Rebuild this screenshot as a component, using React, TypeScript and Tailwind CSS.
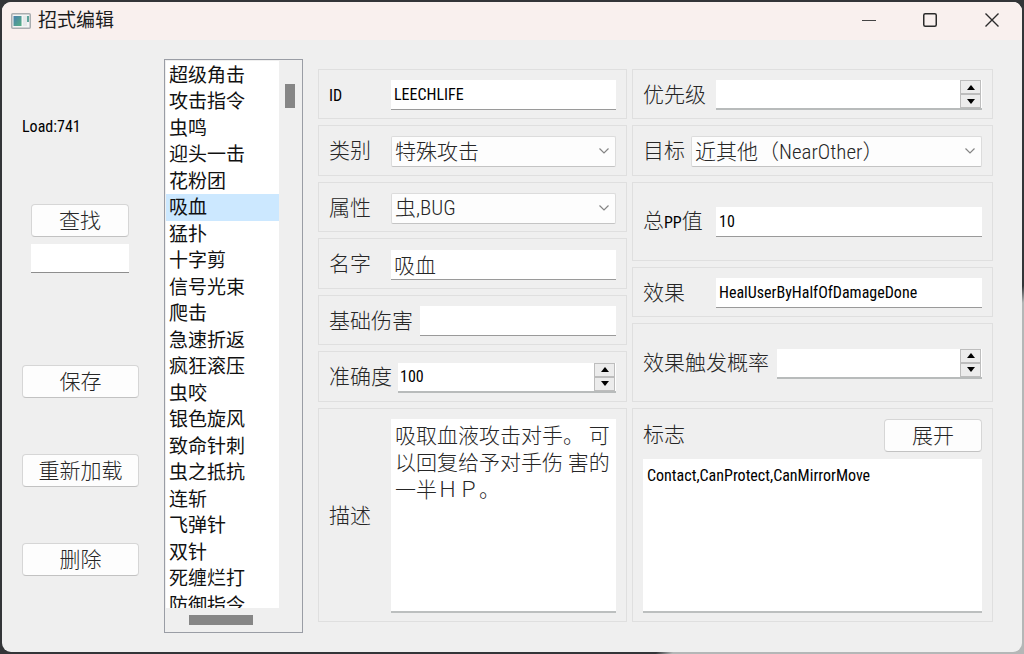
import { useState } from "react";
import type { ReactNode } from "react";

const MOVES = [
  "超级角击", "攻击指令", "虫鸣", "迎头一击", "花粉团", "吸血", "猛扑",
  "十字剪", "信号光束", "爬击", "急速折返", "疯狂滚压", "虫咬", "银色旋风",
  "致命针刺", "虫之抵抗", "连斩", "飞弹针", "双针", "死缠烂打", "防御指令",
];

const LATIN = "font-['Roboto_Condensed','Liberation_Sans_Narrow','Noto_Sans_CJK_SC',sans-serif] text-[16px] font-normal text-black";
const FIELD = "h-[30px] w-full min-w-0 flex-1 border-b border-[#9a9a9a] bg-white px-[3px] outline-none";

function PushButton({ children, className = "" }: { children: ReactNode; className?: string }) {
  return (
    <button
      type="button"
      className={`h-[33px] rounded-[4px] border border-[#d6d6d6] border-b-[#c2c2c2] bg-[#fdfdfd] leading-[30px] ${className}`}
    >
      {children}
    </button>
  );
}

function Box({ children, className = "" }: { children: ReactNode; className?: string }) {
  return <div className={`flex border border-[#dfdfdf] px-[10px] ${className}`}>{children}</div>;
}

function Label({ id, width, children }: { id: string; width: string; children: ReactNode }) {
  return (
    <label htmlFor={id} className={`shrink-0 whitespace-nowrap ${width}`}>
      {children}
    </label>
  );
}

function Combo({ id, value }: { id: string; value: string }) {
  return (
    <div className="relative min-w-0 flex-1">
      <select
        id={id}
        defaultValue={value}
        className="block h-[31px] w-full appearance-none rounded-[2px] border border-[#dcdcdc] border-b-[#c4c4c4] bg-[#fdfdfd] pl-[3px] leading-[28px] outline-none"
      >
        <option>{value}</option>
      </select>
      <svg
        viewBox="0 0 12 8"
        className="pointer-events-none absolute top-[11px] right-[6px] h-2 w-3"
        fill="none"
        stroke="#858585"
        strokeWidth="1.2"
      >
        <path d="M1.5 1.5 6 6l4.5-4.5" />
      </svg>
    </div>
  );
}

function Spin({ id, value }: { id: string; value: string }) {
  const [text, setText] = useState(value);
  const step = (by: number) => setText(String((Number(text) || 0) + by));
  const arrow = "flex h-[14px] w-[21px] items-center justify-center border border-[#bdbdbd] bg-[#ececec]";
  return (
    <div className="flex h-[30px] min-w-0 flex-1 border-b-2 border-[#b8bbbb] bg-white">
      <input
        id={id}
        value={text}
        onChange={(e) => setText(e.target.value)}
        className={`w-full min-w-0 flex-1 px-0.5 outline-none ${LATIN}`}
      />
      <div className="flex flex-col pr-px">
        <button type="button" aria-label="+" onClick={() => step(1)} className={arrow}>
          <svg viewBox="0 0 8 5" className="h-[5px] w-2"><path d="M4 0l4 5H0z" /></svg>
        </button>
        <button type="button" aria-label="-" onClick={() => step(-1)} className={arrow}>
          <svg viewBox="0 0 8 5" className="h-[5px] w-2"><path d="M4 5l4-5H0z" /></svg>
        </button>
      </div>
    </div>
  );
}

function TitleBar() {
  return (
    <header className="flex h-[38px] shrink-0 items-center bg-[#f9f0ee] pl-[9px]">
      <svg viewBox="0 0 20 16" className="h-4 w-5">
        <defs>
          <linearGradient id="pane" x1="0" y1="0" x2="1" y2="1">
            <stop offset="0" stopColor="#4a7fae" />
            <stop offset="1" stopColor="#55b184" />
          </linearGradient>
        </defs>
        <rect x="0.75" y="0.75" width="18.5" height="14.5" rx="1" fill="#f3f5f5" stroke="#a9adb0" strokeWidth="1.5" />
        <rect x="2.5" y="3" width="8" height="10" fill="url(#pane)" />
        <rect x="12" y="3" width="4" height="10" fill="#e4e9ea" />
        <rect x="16" y="3" width="2" height="6" fill="#5fa59b" />
      </svg>
      <h1 className="ml-[7px] flex-1 text-[19px] leading-7 text-[#1c1c1c]">招式编辑</h1>
      <div className="flex h-full pb-[2px]">
        <button type="button" aria-label="最小化" className="flex w-[58px] items-center justify-center">
          <svg viewBox="0 0 14 14" className="size-[14px]" stroke="#444" strokeWidth="1.2"><path d="M0 7.500h14" /></svg>
        </button>
        <button type="button" aria-label="最大化" className="flex w-16 items-center justify-center">
          <svg viewBox="0 0 14 14" className="size-[14px]" fill="none" stroke="#2b2b2b" strokeWidth="1.5">
            <rect x="0.75" y="0.75" width="12.5" height="12.5" rx="1.5" />
          </svg>
        </button>
        <button type="button" aria-label="关闭" className="flex w-[60px] items-center justify-center">
          <svg viewBox="0 0 14 14" className="size-[14px]" stroke="#2b2b2b" strokeWidth="1.4"><path d="M.5.5l13 13M13.500.5l-13 13" /></svg>
        </button>
      </div>
    </header>
  );
}

function MoveList() {
  const [selected, setSelected] = useState(5);
  return (
    <div className="flex w-[139px] shrink-0 flex-col border border-[#9a9da5] p-px">
      <div className="flex min-h-0 flex-1">
        <ul role="listbox" aria-label="招式" className="min-w-0 flex-1 overflow-hidden bg-white pt-px text-[19px] leading-7 text-[#111]">
          {MOVES.map((move, i) => (
            <li
              key={move}
              role="option"
              aria-selected={i === selected}
              onClick={() => setSelected(i)}
              className={`pl-[3px] whitespace-nowrap odd:h-[26px] even:h-[27px] ${i === selected ? "bg-[#cce8ff]" : ""}`}
            >
              {move}
            </li>
          ))}
        </ul>
        <div className="w-[22px] pt-[23px] pl-[6px]">
          <div className="h-6 w-[10px] bg-[#868686]" />
        </div>
      </div>
      <div className="h-[23px] pt-[7px] pl-[23px]">
        <div className="h-[10px] w-16 bg-[#868686]" />
      </div>
    </div>
  );
}

export default function App() {
  return (
    <div className="flex h-screen flex-col bg-[linear-gradient(135deg,#333538_78%,#b4b7b7_79%)] p-[2px] font-['Roboto_Condensed','Liberation_Sans_Narrow','Noto_Sans_CJK_SC',sans-serif] text-[21px] leading-[27px] text-[#262626]">
      <div className="flex min-h-0 flex-1 flex-col overflow-hidden rounded-[9px] bg-[#efefef]">
        <TitleBar />
        <main className="flex min-h-0 flex-1 pt-[19px] pr-[29px] pb-[19px] pl-5">
          <aside className="flex w-[142px] shrink-0 flex-col font-light">
            <p className={`mt-[54px] leading-[27px] ${LATIN}`}>Load:741</p>
            <div className="mt-[64px] ml-[9px] flex w-[98px] flex-col gap-[7px]">
              <PushButton>查找</PushButton>
              <input aria-label="查找" className="h-[29px] w-full border-b border-[#8e8e8e] bg-white px-[3px] outline-none" />
            </div>
            <div className="mt-[92px] flex w-[117px] flex-col gap-14">
              <PushButton>保存</PushButton>
              <PushButton>重新加载</PushButton>
              <PushButton>删除</PushButton>
            </div>
          </aside>

          <MoveList />

          <form className="ml-[15px] flex min-w-0 flex-1 gap-[5px] pt-[10px] pb-[11px] font-light">
            <section className="flex min-w-0 flex-[309] flex-col gap-[6px]">
              <Box className="h-[50px] items-center pt-[2px]">
                <Label id="move-id" width="w-[62px]"><span className={LATIN}>ID</span></Label>
                <input id="move-id" defaultValue="LEECHLIFE" className={`${FIELD} ${LATIN}`} />
              </Box>
              <Box className="h-[51px] items-center pt-[2px]">
                <Label id="category" width="w-[62px]">类别</Label>
                <Combo id="category" value="特殊攻击" />
              </Box>
              <Box className="h-[50px] items-center pt-[2px]">
                <Label id="type" width="w-[62px]">属性</Label>
                <Combo id="type" value="虫,BUG" />
              </Box>
              <Box className="h-[51px] items-center pt-[2px]">
                <Label id="name" width="w-[62px]">名字</Label>
                <input id="name" defaultValue="吸血" className={FIELD} />
              </Box>
              <Box className="h-[50px] items-center pt-[2px]">
                <Label id="power" width="w-[91px]">基础伤害</Label>
                <input id="power" className={FIELD} />
              </Box>
              <Box className="h-[51px] items-center pt-[2px]">
                <Label id="accuracy" width="w-[69px]">准确度</Label>
                <Spin id="accuracy" value="100" />
              </Box>
              <Box className="min-h-0 flex-1 items-center pt-[10px] pb-[8px]">
                <Label id="description" width="w-[62px]">描述</Label>
                <textarea
                  id="description"
                  defaultValue="吸取血液攻击对手。 可以回复给予对手伤 害的一半ＨＰ。"
                  className="h-full min-w-0 flex-1 resize-none overflow-hidden border-b-2 border-[#bcbfbf] bg-white px-1 py-1 outline-none"
                />
              </Box>
            </section>

            <section className="flex min-w-0 flex-[361] flex-col gap-[6px]">
              <Box className="h-[50px] items-center pt-[2px]">
                <Label id="priority" width="w-[73px]">优先级</Label>
                <Spin id="priority" value="" />
              </Box>
              <Box className="h-[51px] items-center pt-[2px]">
                <Label id="target" width="w-[48px]">目标</Label>
                <Combo id="target" value="近其他（NearOther）" />
              </Box>
              <Box className="h-[79px] items-center pt-px">
                <Label id="pp" width="w-[73px]">总<span className={LATIN}>PP</span>值</Label>
                <input id="pp" defaultValue="10" className={`${FIELD} ${LATIN}`} />
              </Box>
              <Box className="h-[50px] items-center pt-[2px]">
                <Label id="effect" width="w-[73px]">效果</Label>
                <input id="effect" defaultValue="HealUserByHalfOfDamageDone" className={`${FIELD} ${LATIN}`} />
              </Box>
              <Box className="h-[79px] items-center pt-[2px]">
                <Label id="chance" width="w-[134px]">效果触发概率</Label>
                <Spin id="chance" value="" />
              </Box>
              <Box className="min-h-0 flex-1 flex-col gap-[7px] pt-[10px] pb-[8px]">
                <div className="flex items-center justify-between">
                  <Label id="flags" width="w-[62px]">标志</Label>
                  <PushButton className="w-[98px]">展开</PushButton>
                </div>
                <textarea
                  id="flags"
                  defaultValue="Contact,CanProtect,CanMirrorMove"
                  className={`min-h-0 w-full flex-1 resize-none overflow-hidden border-b-2 border-[#bcbfbf] bg-white px-1 py-[3px] leading-[27px] outline-none ${LATIN}`}
                />
              </Box>
            </section>
          </form>
        </main>
      </div>
    </div>
  );
}
